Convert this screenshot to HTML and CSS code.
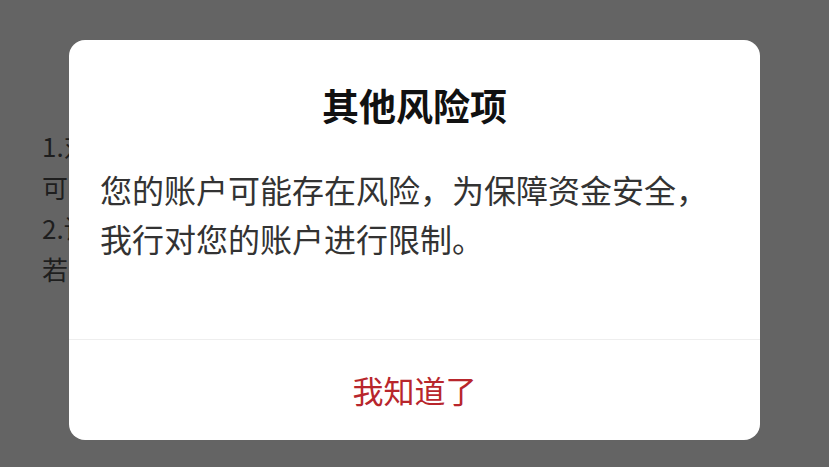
FILE: index.html
```html
<!DOCTYPE html>
<html lang="zh-CN">
<head>
<meta charset="utf-8">
<link rel="stylesheet" href="styles.css">
</head>
<body>
<div class="page">
  <p class="bg-line">1.对您的账户进行风险核查，如有疑问请联系客服进行处理解</p>
  <p class="bg-line">可能影响您的正常交易</p>
  <p class="bg-line">2.请携带有效证件前往网点办理</p>
  <p class="bg-line">若有疑问请咨询客服</p>
</div>
<div class="overlay">
  <div class="dialog">
    <h1 class="dialog-title">其他风险项</h1>
    <p class="dialog-body">您的账户可能存在风险，为保障资金安全，<br>我行对您的账户进行限制。</p>
    <div class="dialog-spacer"></div>
    <div class="dialog-footer">
      <span class="dialog-btn">我知道了</span>
    </div>
  </div>
</div>
</body>
</html>
```

FILE: styles.css
```css
html, body {
  margin: 0;
  padding: 0;
}
body {
  width: 829px;
  height: 467px;
  overflow: hidden;
  background: #646464;
  font-family: "Noto Sans CJK SC", "Noto Sans", sans-serif;
  position: relative;
}
.page {
  padding: 125px 0 0 42px;
  width: 724px;
  overflow: hidden;
}
.bg-line {
  margin: 0;
  font-size: 26px;
  line-height: 41px;
  color: #1e1e1e;
  white-space: nowrap;
}
.overlay {
  position: absolute;
  left: 69px;
  top: 40px;
}
.dialog {
  width: 691px;
  height: 400px;
  background: #ffffff;
  border-radius: 16px;
  display: flex;
  flex-direction: column;
  overflow: hidden;
}
.dialog-title {
  margin: 0;
  padding-top: 40px;
  font-size: 37px;
  line-height: 50px;
  font-weight: 700;
  color: #111111;
  text-align: center;
}
.dialog-body {
  margin: 35px 0 0;
  padding: 0 31px;
  font-size: 32px;
  line-height: 49px;
  color: #333333;
}
.dialog-spacer {
  flex: 1;
}
.dialog-footer {
  height: 100px;
  border-top: 1px solid #eeeeee;
  display: flex;
  align-items: center;
  justify-content: center;
}
.dialog-btn {
  font-size: 31px;
  line-height: 40px;
  color: #b8262c;
}
```
